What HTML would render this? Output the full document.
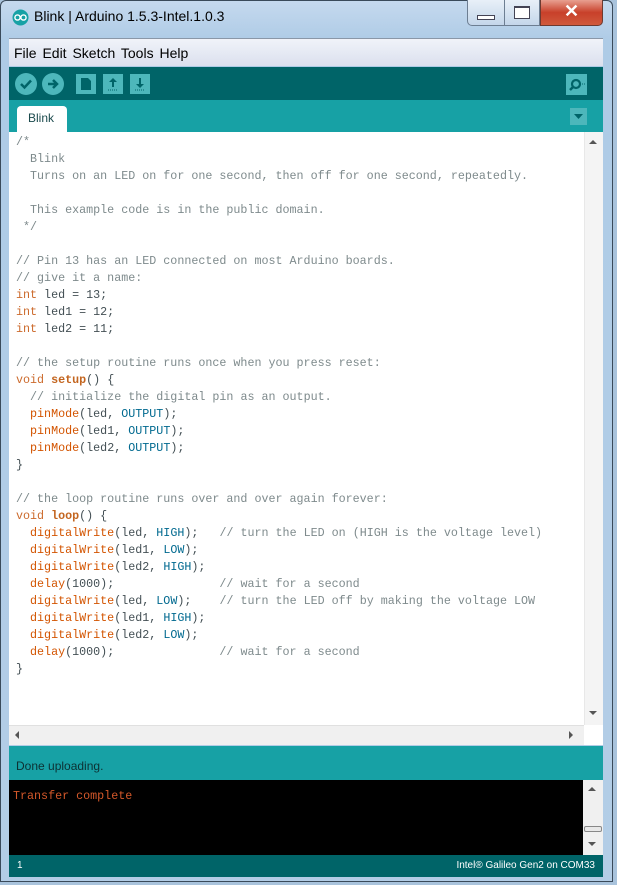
<!DOCTYPE html>
<html><head><meta charset="utf-8"><style>
*{margin:0;padding:0;box-sizing:border-box}
body{width:617px;height:885px;overflow:hidden;background:#a9c3dc;font-family:"Liberation Sans",sans-serif;position:relative}
.abs{position:absolute}
#frame{left:0;top:0;width:613px;height:882px;background:linear-gradient(#c5d9ee,#aecbe6 40px,#b3cde6);border:1px solid #3a4a5a;border-radius:6px 6px 0 0}
#title{left:34px;top:8px;font-size:14px;color:#000}
#menu{left:9px;top:38px;width:594px;height:28px;background:linear-gradient(#f0f3f9,#dbe0ee);border-top:1px solid #8a97a8;font-size:14px;padding:6px 0 0 5px;color:#000;word-spacing:2px}
#tool{left:9px;top:67px;width:594px;height:33px;background:#006468}
#tabs{left:9px;top:100px;width:594px;height:32px;background:#17a1a5}
#tab{left:17px;top:106px;width:50px;height:26px;background:#fff;border-radius:4px 4px 0 0;font-size:12px;color:#1b4a4d;padding:5px 0 0 11px}
#ed{left:9px;top:132px;width:594px;height:593px;background:#fff}
#code{left:16px;top:134px;font-family:"Liberation Mono",monospace;font-size:11.7px;line-height:17px;color:#434f54;white-space:pre}
.c{color:#7e8a8c}.k{color:#cc6a2c}.f{color:#d35400}.b{color:#c3651f;font-weight:bold}.n{color:#00698f}
#vs{left:584px;top:132px;width:19px;height:593px;background:#f4f4f4;border-left:1px solid #e8e8e8}
#hs{left:9px;top:725px;width:575px;height:20px;background:#f0f0f0;border-top:1px solid #e0e0e0}
#stat{left:9px;top:746px;width:594px;height:34px;background:#17a1a5;font-size:12px;color:#0d3133;padding:13px 0 0 7px}
#con{left:9px;top:780px;width:594px;height:75px;background:#000}
#cons{left:13px;top:789px;font-family:"Liberation Mono",monospace;font-size:11.7px;color:#d4582a}
#cvs{left:583px;top:780px;width:20px;height:75px;background:#f0f0f0}
#bot{left:9px;top:855px;width:594px;height:22px;background:#006468;color:#fff;font-size:10px;padding:5px 8px 0 8px}
.tb{background:#4db7bb;position:absolute}
</style></head><body>
<div id="frame" class="abs"></div>
<svg class="abs" style="left:12px;top:9px" width="17" height="17"><circle cx="8.5" cy="8.5" r="8" fill="#17a1a5"/><circle cx="5.5" cy="8.5" r="2.6" fill="none" stroke="#fff" stroke-width="1.4"/><circle cx="11.5" cy="8.5" r="2.6" fill="none" stroke="#fff" stroke-width="1.4"/></svg>
<div id="title" class="abs">Blink | Arduino 1.5.3-Intel.1.0.3</div>
<div class="abs" style="left:467px;top:0;width:73px;height:26px;background:linear-gradient(#e8f0f8,#c4d6ea);border:1px solid #6d7e92;border-top:none;border-radius:0 0 0 5px"></div>
<div class="abs" style="left:504px;top:0;width:1px;height:26px;background:#6d7e92"></div>
<div class="abs" style="left:477px;top:15px;width:18px;height:5px;border:1px solid #445;background:#fff"></div>
<div class="abs" style="left:514px;top:6px;width:16px;height:13px;border:1px solid #445;border-top-width:2px;background:#fff"></div>
<div class="abs" style="left:540px;top:0;width:63px;height:26px;background:linear-gradient(#e8a090,#c8402a 50%,#d05a3c);border:1px solid #6d3a30;border-top:none;border-radius:0 0 5px 0;color:#fff;font-size:18px;font-weight:bold;text-align:center;line-height:22px">✕</div>
<div id="menu" class="abs">File Edit Sketch Tools Help</div>
<div id="tool" class="abs"></div>
<svg class="abs" style="left:14px;top:72px" width="140" height="24">
<circle cx="12" cy="12" r="11" fill="#4db7bb"/><path d="M7 12l3.5 3.5L17 8.5" stroke="#006468" stroke-width="2.5" fill="none"/>
<circle cx="39" cy="12" r="11" fill="#4db7bb"/><path d="M34 12h8M39 8l4 4-4 4" stroke="#006468" stroke-width="2.5" fill="none"/>
<rect x="62" y="2" width="20" height="20" fill="#4db7bb"/><path d="M67 6h7l3 3v9h-10z" fill="#006468"/>
<rect x="89" y="2" width="20" height="20" fill="#4db7bb"/><path d="M99 6l-4 4h3v5h2v-5h3z" fill="#006468"/><path d="M94 18h10" stroke="#006468" stroke-dasharray="1 1"/>
<rect x="116" y="2" width="20" height="20" fill="#4db7bb"/><path d="M126 16l-4-4h3v-6h2v6h3z" fill="#006468"/><path d="M121 18h10" stroke="#006468" stroke-dasharray="1 1"/>
</svg>
<div class="tb" style="left:566px;top:74px;width:21px;height:21px"></div>
<svg class="abs" style="left:566px;top:74px" width="21" height="21"><circle cx="10" cy="10" r="4" fill="none" stroke="#006468" stroke-width="2.2"/><path d="M7 13l-3 3" stroke="#006468" stroke-width="2.5"/><path d="M16 10h3" stroke="#006468" stroke-dasharray="1 1"/></svg>
<div id="tabs" class="abs"></div>
<div id="tab" class="abs">Blink</div>
<div class="tb" style="left:570px;top:108px;width:17px;height:17px"></div>
<svg class="abs" style="left:570px;top:108px" width="17" height="17"><path d="M4 6h9l-4.5 5z" fill="#006468"/></svg>
<div id="ed" class="abs"></div>
<div id="code" class="abs"><span class="c">/*
  Blink
  Turns on an LED on for one second, then off for one second, repeatedly.

  This example code is in the public domain.
 */</span>

<span class="c">// Pin 13 has an LED connected on most Arduino boards.
// give it a name:</span>
<span class="k">int</span> led = 13;
<span class="k">int</span> led1 = 12;
<span class="k">int</span> led2 = 11;

<span class="c">// the setup routine runs once when you press reset:</span>
<span class="k">void</span> <span class="b">setup</span>() {
  <span class="c">// initialize the digital pin as an output.</span>
  <span class="f">pinMode</span>(led, <span class="n">OUTPUT</span>);
  <span class="f">pinMode</span>(led1, <span class="n">OUTPUT</span>);
  <span class="f">pinMode</span>(led2, <span class="n">OUTPUT</span>);
}

<span class="c">// the loop routine runs over and over again forever:</span>
<span class="k">void</span> <span class="b">loop</span>() {
  <span class="f">digitalWrite</span>(led, <span class="n">HIGH</span>);   <span class="c">// turn the LED on (HIGH is the voltage level)</span>
  <span class="f">digitalWrite</span>(led1, <span class="n">LOW</span>);
  <span class="f">digitalWrite</span>(led2, <span class="n">HIGH</span>);
  <span class="f">delay</span>(1000);               <span class="c">// wait for a second</span>
  <span class="f">digitalWrite</span>(led, <span class="n">LOW</span>);    <span class="c">// turn the LED off by making the voltage LOW</span>
  <span class="f">digitalWrite</span>(led1, <span class="n">HIGH</span>);
  <span class="f">digitalWrite</span>(led2, <span class="n">LOW</span>);
  <span class="f">delay</span>(1000);               <span class="c">// wait for a second</span>
}</div>
<div id="vs" class="abs"></div>
<svg class="abs" style="left:586px;top:137px" width="14" height="10"><path d="M3 7h8l-4-4z" fill="#555"/></svg>
<svg class="abs" style="left:586px;top:708px" width="14" height="10"><path d="M3 3h8l-4 4z" fill="#555"/></svg>
<div id="hs" class="abs"></div>
<svg class="abs" style="left:12px;top:729px" width="10" height="12"><path d="M7 2v8l-4-4z" fill="#555"/></svg>
<svg class="abs" style="left:566px;top:729px" width="10" height="12"><path d="M3 2v8l4-4z" fill="#555"/></svg>
<div class="abs" style="left:584px;top:725px;width:19px;height:20px;background:#fff"></div>
<div id="stat" class="abs">Done uploading.</div>
<div id="con" class="abs"></div>
<div id="cons" class="abs">Transfer complete</div>
<div id="cvs" class="abs"></div>
<svg class="abs" style="left:585px;top:784px" width="14" height="10"><path d="M3 7h8l-4-4z" fill="#555"/></svg>
<div class="abs" style="left:584px;top:826px;width:18px;height:6px;border:1px solid #888;border-radius:2px;background:#e8e8e8"></div>
<svg class="abs" style="left:585px;top:839px" width="14" height="10"><path d="M3 3h8l-4 4z" fill="#555"/></svg>
<div id="bot" class="abs"><span>1</span><span style="float:right">Intel® Galileo Gen2 on COM33</span></div>
</body></html>
